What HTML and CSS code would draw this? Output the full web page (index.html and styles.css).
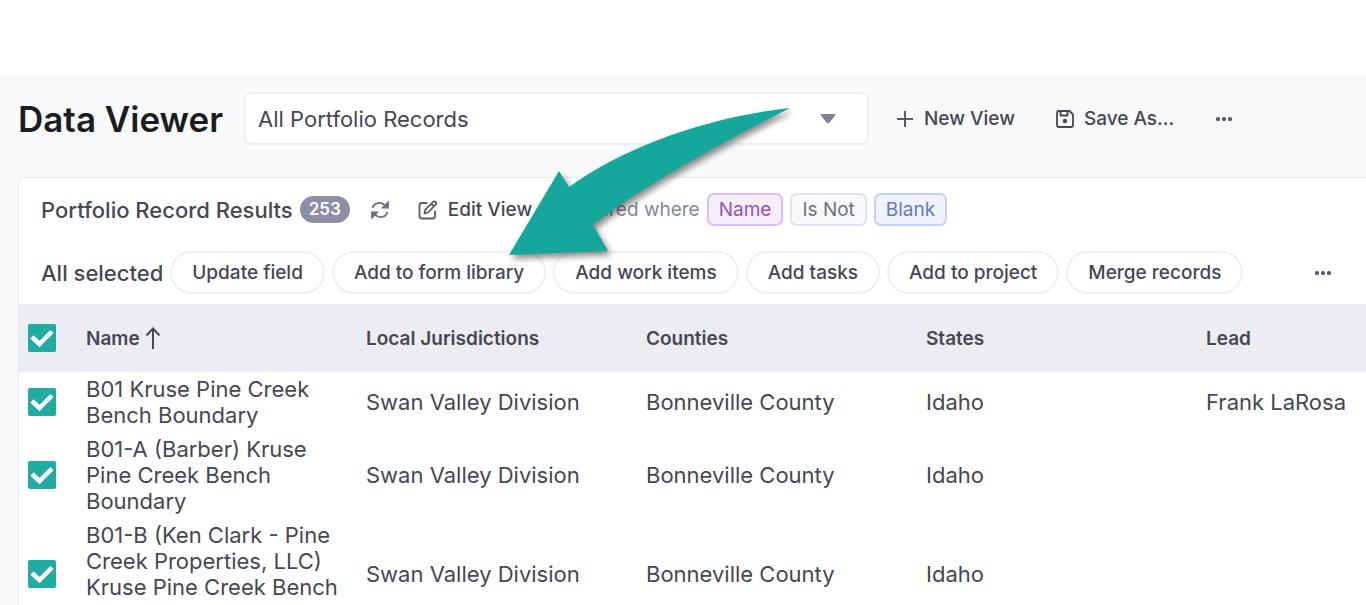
FILE: index.html
```html
<!DOCTYPE html>
<html lang="en">
<head>
  <meta charset="UTF-8">
  <meta name="viewport" content="width=device-width, initial-scale=1.0">
  <title>Data Viewer</title>
  <link rel="stylesheet" href="styles.css">
</head>
<body>
  <main class="viewer">
    <!-- View picker -->
    <header class="view-bar">
      <h1>Data Viewer</h1>
      <div class="view-select">
        <select aria-label="View">
          <option>All Portfolio Records</option>
        </select>
        <svg class="caret" width="16" height="10" viewBox="0 0 16 10"><path d="M1.500 0h13q1.500 0 .6 1.500L9.500 8.500Q8 10 6.500 8.500L.9 1.500Q0 0 1.500 0z" fill="#7e8299"/></svg>
      </div>
      <button class="text-btn new-view">
        <svg width="17" height="18" viewBox="0 0 17 18" fill="none" stroke="#5a5d6b" stroke-width="2"><path d="M8 1v16M0 9h16"/></svg>
        New View
      </button>
      <button class="text-btn save-as">
        <svg width="18" height="18" viewBox="0 0 18 18" fill="none" stroke="#454754" stroke-width="1.800" stroke-linejoin="round"><path d="M3 1h10.500L17 4.500V15q0 2-2 2H3q-2 0-2-2V3q0-2 2-2z"/><path d="M4.500 1.500v4h7v-4"/><circle cx="9" cy="11" r="2.200" fill="#454754" stroke="none"/></svg>
        Save As...
      </button>
      <button class="dots-btn" aria-label="More view actions">
        <svg width="16" height="4" viewBox="0 0 16 4" fill="#5a5d6b"><rect width="4" height="4" rx="1.500"/><rect x="6" width="4" height="4" rx="1.500"/><rect x="12" width="4" height="4" rx="1.500"/></svg>
      </button>
    </header>

    <section class="panel">
      <!-- Results summary and filter -->
      <div class="results-bar">
        <h2>Portfolio Record Results</h2>
        <span class="count">253</span>
        <button class="icon-btn" aria-label="Refresh">
          <svg width="20" height="18" viewBox="0 0 20 18" fill="none" stroke="#6b7080" stroke-width="1.800"><path d="M2.500 7C4 1.500 11 0 15.500 5M17.500 11C16 16.500 9 18 4.500 13"/><path d="M18 1.500v5h-5zM2 16.500v-5h5z" fill="#8b8fa0"/></svg>
        </button>
        <button class="text-btn edit-view">
          <svg width="20" height="20" viewBox="0 0 20 20" fill="none" stroke="#5a5d6b" stroke-width="1.800" stroke-linejoin="round" stroke-linecap="round"><path d="M8.500 3H4Q1.500 3 1.500 5.500V16q0 2.500 2.500 2.500h10.500q2.500 0 2.500-2.500v-4.500"/><path d="M6.500 13.500l.8-3.800L15.200 1.800q1.200-1 2.400.2t.2 2.400L10 12.500zM13.500 3.800l2.500 2.500"/></svg>
          Edit View
        </button>
        <span class="filter-label">Filtered where</span>
        <span class="tag tag-purple">Name</span>
        <span class="tag tag-gray">Is Not</span>
        <span class="tag tag-blue">Blank</span>
      </div>

      <!-- Bulk actions -->
      <div class="actions-bar">
        <span class="selected">All selected</span>
        <button class="pill">Update field</button>
        <button class="pill">Add to form library</button>
        <button class="pill">Add work items</button>
        <button class="pill">Add tasks</button>
        <button class="pill">Add to project</button>
        <button class="pill">Merge records</button>
        <button class="dots-btn actions-more" aria-label="More actions">
          <svg width="16" height="4" viewBox="0 0 16 4" fill="#5a5d6b"><rect width="4" height="4" rx="1.500"/><rect x="6" width="4" height="4" rx="1.500"/><rect x="12" width="4" height="4" rx="1.500"/></svg>
        </button>
      </div>

      <table>
        <colgroup>
          <col class="col-check">
          <col class="col-data">
          <col class="col-data">
          <col class="col-data">
          <col class="col-data">
          <col>
        </colgroup>
        <thead>
          <tr>
            <th><input type="checkbox" aria-label="Select all" checked></th>
            <th>Name <svg class="sort" width="16" height="22" viewBox="0 0 16 22" fill="none" stroke="#454754" stroke-width="2"><path d="M8 22V1.500M1.500 8.500L8 1.500l6.500 7"/></svg></th>
            <th>Local Jurisdictions</th>
            <th>Counties</th>
            <th>States</th>
            <th>Lead</th>
          </tr>
        </thead>
        <tbody>
          <tr>
            <td><input type="checkbox" aria-label="Select B01" checked></td>
            <td class="name">B01 Kruse Pine Creek Bench Boundary</td>
            <td>Swan Valley Division</td>
            <td>Bonneville County</td>
            <td>Idaho</td>
            <td>Frank LaRosa</td>
          </tr>
          <tr>
            <td><input type="checkbox" aria-label="Select B01-A" checked></td>
            <td class="name">B01-A (Barber) Kruse Pine Creek Bench Boundary</td>
            <td>Swan Valley Division</td>
            <td>Bonneville County</td>
            <td>Idaho</td>
            <td></td>
          </tr>
          <tr class="tall">
            <td><input type="checkbox" aria-label="Select B01-B" checked></td>
            <td class="name">B01-B (Ken Clark - Pine Creek Properties, LLC) Kruse Pine Creek Bench</td>
            <td>Swan Valley Division</td>
            <td>Bonneville County</td>
            <td>Idaho</td>
            <td></td>
          </tr>
        </tbody>
      </table>
    </section>

    <!-- Callout arrow pointing at "Add to form library" -->
    <svg class="callout" width="300" height="165" viewBox="500 100 300 165">
      <path d="M509 255L559 171L569 187C620 150 700 118 790 108C715 146 640 188 593 225L608 251Z" fill="#16a79c"/>
    </svg>
  </main>
</body>
</html>
```

FILE: styles.css
```css
:root {
  --text: #454754;
  --text-dark: #1c1d23;
  --muted: #858898;
  --border: #e9eaf2;
  --page: #f8f9fb;
  --head: #ecedf3;
  --teal: #20aca2;
}

* {
  box-sizing: border-box;
}

body {
  margin: 0;
  padding-top: 76px;
  height: 100vh;
  overflow: hidden;
  font-family: Inter, sans-serif;
  font-size: 22px;
  color: var(--text);
  background: #fff;
}

button {
  font-family: inherit;
  color: inherit;
  background: none;
  border: none;
  padding: 0;
  cursor: pointer;
}

svg {
  flex: none;
}

.viewer {
  position: relative;
  padding: 16px 0 0 18px;
  background: var(--page);
}

/* View bar */
.view-bar {
  display: flex;
  align-items: center;
  margin-bottom: 32px;
}

h1 {
  margin: 0;
  width: 226px;
  font-size: 35px;
  font-weight: 600;
  line-height: 52px;
  color: var(--text-dark);
  white-space: nowrap;
}

.view-select {
  position: relative;
  flex: 0 1 625px;
}

.view-select select {
  display: block;
  width: 100%;
  height: 53px;
  padding: 0 12px;
  appearance: none;
  font-family: inherit;
  font-size: 22px;
  color: var(--text);
  background: #fff;
  border: 2px solid #eeeff6;
  border-radius: 7px;
}

.caret {
  position: absolute;
  top: 22px;
  right: 33px;
  pointer-events: none;
}

.text-btn {
  display: flex;
  align-items: center;
  gap: 10px;
  font-size: 19px;
  font-weight: 500;
  white-space: nowrap;
}

.new-view {
  margin-left: 28px;
}

.save-as {
  margin-left: 41px;
}

.dots-btn {
  display: flex;
  margin-left: 42px;
}

/* Panel */
.panel {
  background: #fff;
  border: 1px solid var(--border);
  border-right: none;
  border-radius: 7px 0 0 0;
}

.results-bar {
  display: flex;
  align-items: center;
  padding: 15px 22px 0;
  height: 48px;
  white-space: nowrap;
}

h2 {
  margin: 0 7px 0 0;
  font-size: 22px;
  font-weight: 500;
}

.count {
  padding: 0 9px;
  font-size: 17px;
  font-weight: 600;
  line-height: 27px;
  color: #fff;
  background: #8c8ea4;
  border-radius: 14px;
}

.icon-btn {
  display: flex;
  margin-left: 20px;
}

.edit-view {
  margin-left: 28px;
}

.filter-label {
  margin: 0 7px 0 39px;
  font-size: 19px;
  color: var(--muted);
}

.tag {
  margin-right: 7px;
  padding: 0 10px;
  font-size: 19px;
  line-height: 29px;
  border: 2px solid;
  border-radius: 7px;
}

.tag-purple {
  color: #9152cc;
  background: #f6edff;
  border-color: #d9bdfb;
}

.tag-gray {
  color: #6b7080;
  background: #f8f9fb;
  border-color: #e1e3ec;
}

.tag-blue {
  color: #6478cc;
  background: #eff2ff;
  border-color: #c5d0fb;
}

.actions-bar {
  display: flex;
  align-items: center;
  gap: 7px;
  padding: 25px 35px 10px 22px;
  white-space: nowrap;
}

.selected {
  font-weight: 500;
}

.pill {
  height: 43px;
  padding: 0 20px;
  font-size: 19px;
  font-weight: 500;
  border: 2px solid #eeeff6;
  border-radius: 22px;
}

.actions-more {
  margin-left: auto;
}

/* Records table */
table {
  width: 100%;
  table-layout: fixed;
  border-collapse: collapse;
}

.col-check {
  width: 67px;
}

.col-data {
  width: 280px;
}

th {
  height: 68px;
  padding: 0;
  font-size: 19px;
  font-weight: 600;
  text-align: left;
  background: var(--head);
}

td {
  padding: 4px 16px 4px 0;
  line-height: 26px;
}

td:last-child {
  padding-right: 0;
}

th:first-child,
td:first-child {
  padding: 0 0 0 9px;
}

.name {
  vertical-align: top;
}

.tall {
  height: 112px;
}

.sort {
  margin-left: 1px;
  vertical-align: -4px;
}

input[type="checkbox"] {
  display: block;
  width: 28px;
  height: 28px;
  margin: 0;
  appearance: none;
  background: var(--teal) url('data:image/svg+xml,<svg xmlns="http://www.w3.org/2000/svg" viewBox="0 0 28 28"><path d="M4 13l7.500 7L24 7.500" fill="none" stroke="white" stroke-width="4.500"/></svg>');
  border-radius: 2px;
}

/* Callout arrow */
.callout {
  position: absolute;
  top: 24px;
  left: 500px;
  filter: drop-shadow(3px 4px 3px rgba(0, 0, 0, 0.45));
  pointer-events: none;
}
```
